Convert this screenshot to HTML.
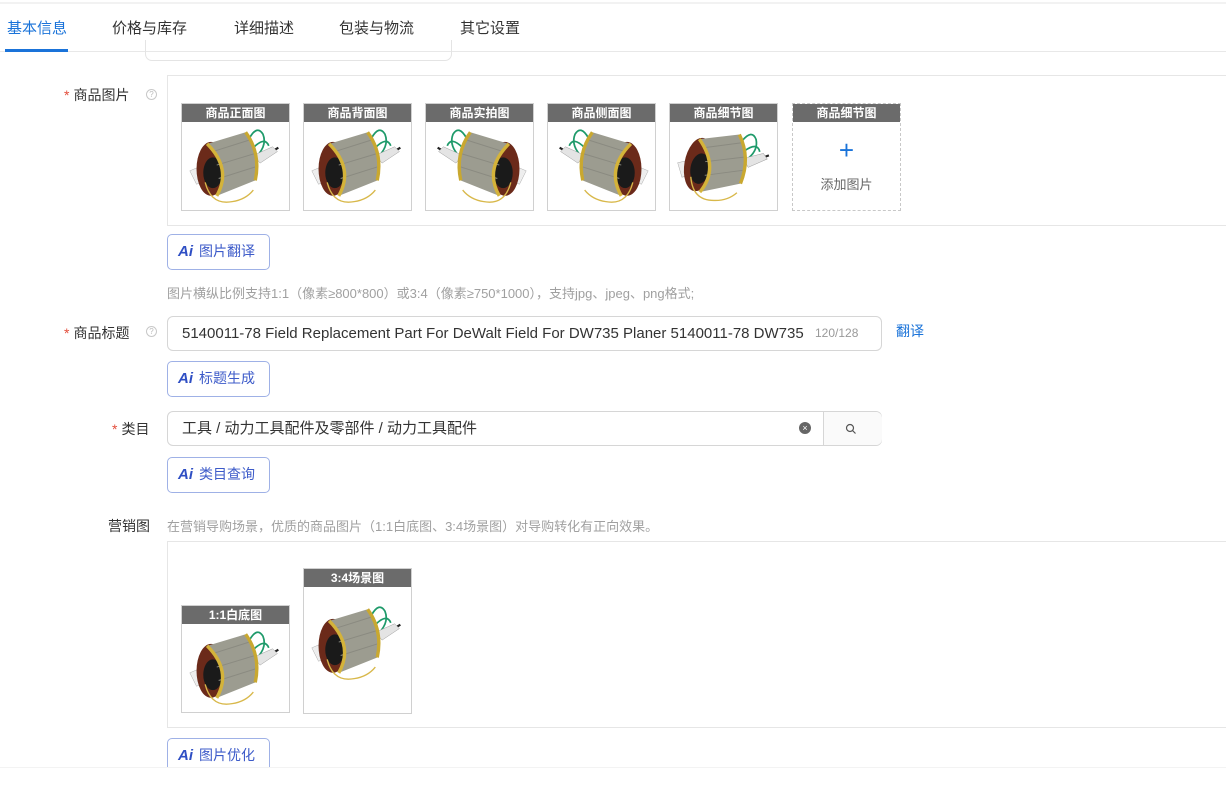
<!DOCTYPE html>
<html><head><meta charset="utf-8"><style>
*{margin:0;padding:0;box-sizing:border-box}
body{width:1226px;height:803px;position:relative;background:#fff;font-family:"Liberation Sans","Noto Sans CJK SC",sans-serif;color:#333;overflow:hidden}
.a{position:absolute}
.tab{position:absolute;top:17px;font-size:15px;color:#333;white-space:nowrap}
.lbl{position:absolute;font-size:14px;color:#333;white-space:nowrap}
.req{color:#e34d3b;margin-right:4px}
.help{position:absolute;width:11px;height:11px;border:1px solid #c8c8c8;border-radius:50%;font-size:8px;color:#bbb;text-align:center;line-height:9px}
.box{position:absolute;border:1px solid #e6e6e6;border-right:none}
.th{position:absolute;width:109px;height:108px;border:1px solid #d0d0d0;background:#fff;overflow:hidden}
.th .h{height:18px;background:#6b6b6b;color:#fff;font-size:12px;font-weight:bold;text-align:center;line-height:18px}
.th svg{display:block;margin:0 auto}
.ai{position:absolute;left:167px;width:103px;height:36px;border:1px solid #9fb1e6;border-radius:5px;font-size:14px;color:#3d5bc9;line-height:33px;padding-left:10px;white-space:nowrap;background:#fff}
.ai b{font-style:italic;font-weight:900;color:#2f4fc4;margin-right:6px;font-size:15px}
.inp{position:absolute;left:167px;width:715px;height:35px;border:1px solid #d6d6d6;border-radius:6px;font-size:15px;line-height:33px;padding-left:14px;color:#333;white-space:nowrap}
.hint{position:absolute;font-size:13px;color:#a0a0a0;white-space:nowrap}
</style></head><body>
<svg width="0" height="0" style="position:absolute"><defs>
<symbol id="m" viewBox="0 0 108 90">
<path d="M68 16 q8 -14 14 -4 q4 10 -4 20" fill="none" stroke="#1e9a6a" stroke-width="1.8"/>
<path d="M72 26 q12 -12 16 -2" fill="none" stroke="#1e9a6a" stroke-width="1.8"/>
<path d="M74 40 l24 -14" stroke="#222" stroke-width="2.2"/>
<path d="M72 34 l20 -9 l5 5 l-18 12z" fill="#e4e4e4" stroke="#999" stroke-width=".5"/>
<path d="M6 50 l12 -5 l7 14 l-12 5z" fill="#eee" stroke="#aaa" stroke-width=".5"/>
<ellipse cx="28" cy="48" rx="15" ry="28" fill="#6b2a1a"/>
<ellipse cx="30" cy="52" rx="10" ry="16" fill="#1a1a1a"/>
<path d="M24 22 L64 10 Q80 32 74 60 L34 76 Q50 48 24 22Z" fill="#9c9c90"/>
<path d="M30 30 L68 18 M34 44 L74 32 M36 58 L74 46" stroke="#8a8a80" stroke-width="1"/>
<path d="M64 10 Q80 32 74 60" fill="none" stroke="#c9a830" stroke-width="3.5"/>
<path d="M24 22 Q50 48 34 76" fill="none" stroke="#d4b33a" stroke-width="3.5"/>
<path d="M22 62 q6 24 28 20 q14 -2 22 -12" fill="none" stroke="#d8b84a" stroke-width="1.4"/>
</symbol></defs></svg>

<div class="a" style="left:0;top:2px;width:1226px;height:2px;background:#f2f2f2"></div>
<div class="tab" style="left:7px;color:#1a73d9">基本信息</div>
<div class="tab" style="left:112px">价格与库存</div>
<div class="tab" style="left:234px">详细描述</div>
<div class="tab" style="left:339px">包装与物流</div>
<div class="tab" style="left:460px">其它设置</div>
<div class="a" style="left:0;top:51px;width:1226px;height:1px;background:#e8e8e8"></div>
<div class="a" style="left:5px;top:49px;width:63px;height:3px;background:#1a73d9"></div>
<div class="a" style="left:145px;top:40px;width:307px;height:21px;border:1px solid #e4e4e4;border-top:none;border-radius:0 0 7px 7px"></div>

<div class="lbl" style="left:64px;top:85px"><span class="req">*</span>商品图片</div>
<div class="help" style="left:146px;top:89px">?</div>
<div class="box" style="left:167px;top:75px;width:1060px;height:151px"></div>
<div class="th" style="left:181px;top:103px"><div class="h">商品正面图</div><svg width="104" height="88"><use href="#m"/></svg></div>
<div class="th" style="left:303px;top:103px"><div class="h">商品背面图</div><svg width="104" height="88"><use href="#m"/></svg></div>
<div class="th" style="left:425px;top:103px"><div class="h">商品实拍图</div><svg width="104" height="88" style="transform:scaleX(-1)"><use href="#m"/></svg></div>
<div class="th" style="left:547px;top:103px"><div class="h">商品侧面图</div><svg width="104" height="88" style="transform:scaleX(-1)"><use href="#m"/></svg></div>
<div class="th" style="left:669px;top:103px"><div class="h">商品细节图</div><svg width="104" height="88" style="transform:rotate(10deg)"><use href="#m"/></svg></div>
<div class="th" style="left:792px;top:103px;border:1px dashed #c8c8c8"><div class="h">商品细节图</div>
<div style="text-align:center;color:#1a73d9;font-size:26px;line-height:26px;margin-top:15px">+</div>
<div style="text-align:center;color:#666;font-size:13px;margin-top:11px">添加图片</div></div>

<div class="ai" style="top:234px"><b>Ai</b>图片翻译</div>
<div class="hint" style="left:167px;top:283px">图片横纵比例支持1:1（像素≥800*800）或3:4（像素≥750*1000），支持jpg、jpeg、png格式;</div>

<div class="lbl" style="left:64px;top:323px"><span class="req">*</span>商品标题</div>
<div class="help" style="left:146px;top:326px">?</div>
<div class="inp" style="top:316px">5140011-78 Field Replacement Part For DeWalt Field For DW735 Planer 5140011-78 DW735<span style="position:absolute;left:647px;font-size:12px;color:#999">120/128</span></div>
<div class="lbl" style="left:896px;top:321px;color:#1a73d9">翻译</div>
<div class="ai" style="top:361px"><b>Ai</b>标题生成</div>

<div class="lbl" style="left:112px;top:419px"><span class="req">*</span>类目</div>
<div class="inp" style="top:411px">工具 / 动力工具配件及零部件 / 动力工具配件
<span style="position:absolute;left:631px;top:10px;width:12px;height:12px;border-radius:50%;background:#666;color:#fff;font-size:9px;line-height:12px;text-align:center">×</span>
<span style="position:absolute;left:655px;top:0;width:59px;height:33px;border-left:1px solid #d6d6d6;background:#fafafa;border-radius:0 6px 6px 0"><svg width="12" height="12" style="position:absolute;left:21px;top:11px"><circle cx="5" cy="5" r="3.5" fill="none" stroke="#555" stroke-width="1.2"/><path d="M7.5 7.5 L10.5 10.5" stroke="#555" stroke-width="1.2"/></svg></span></div>
<div class="ai" style="top:457px"><b>Ai</b>类目查询</div>

<div class="lbl" style="left:108px;top:516px">营销图</div>
<div class="hint" style="left:167px;top:516px">在营销导购场景，优质的商品图片（1:1白底图、3:4场景图）对导购转化有正向效果。</div>
<div class="box" style="left:167px;top:541px;width:1060px;height:187px"></div>
<div class="th" style="left:181px;top:605px"><div class="h">1:1白底图</div><svg width="104" height="88"><use href="#m"/></svg></div>
<div class="th" style="left:303px;top:568px;height:146px"><div class="h">3:4场景图</div><svg width="104" height="88" style="margin-top:12px"><use href="#m"/></svg></div>
<div class="ai" style="top:738px"><b>Ai</b>图片优化</div>
<div class="a" style="left:0;top:767px;width:1226px;height:36px;background:#fff;border-top:1px solid #f3f3f3"></div>
</body></html>
